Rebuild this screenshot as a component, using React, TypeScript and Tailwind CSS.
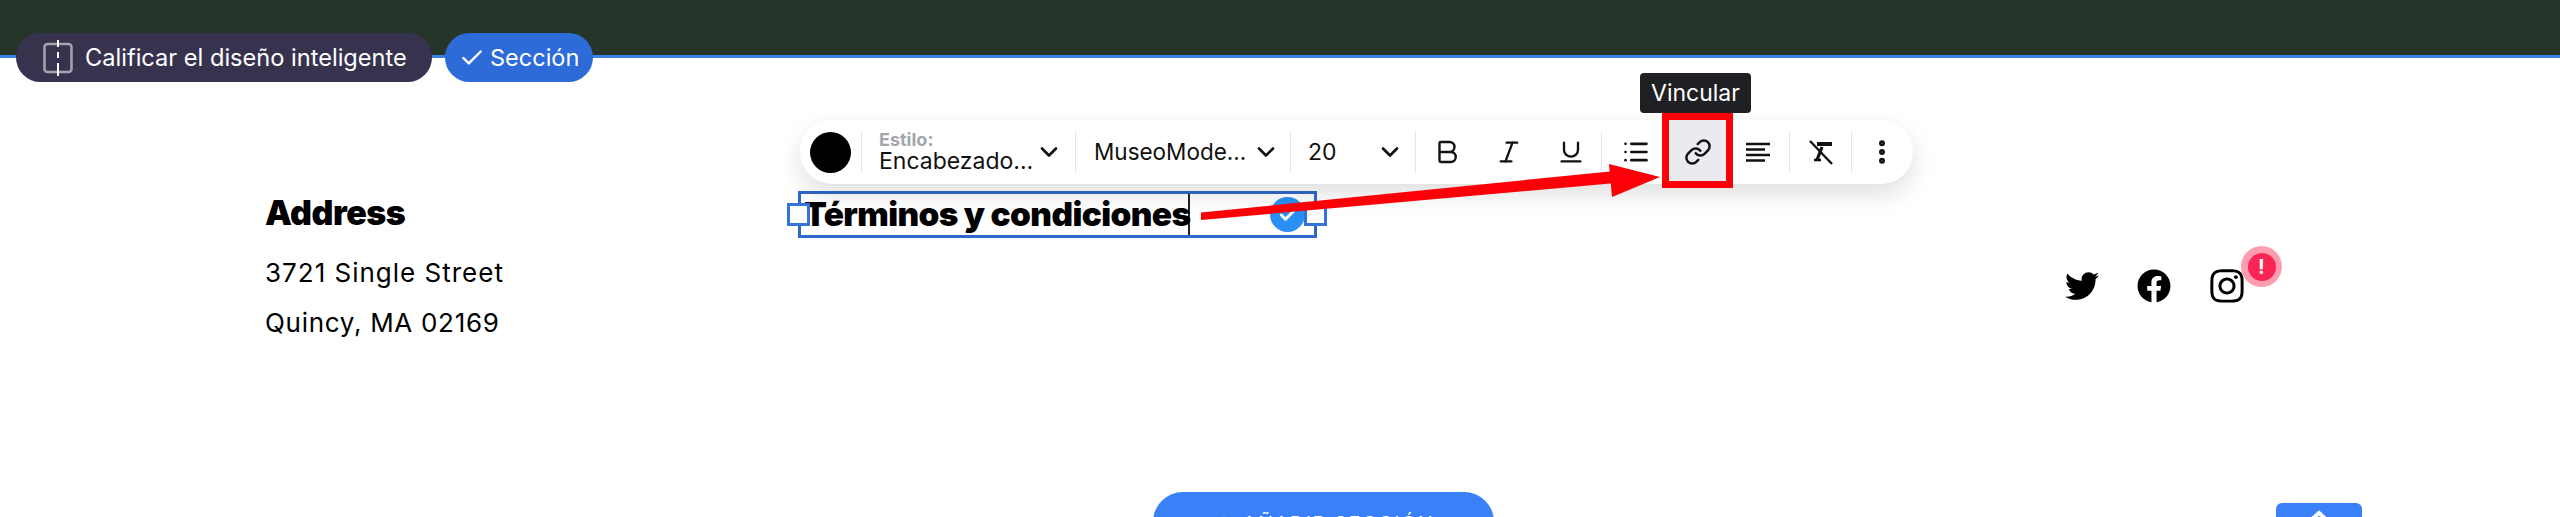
import { Bold, Check, ChevronDown, Italic, Link, List, Plus, Underline, EllipsisVertical } from "lucide-react";
import { FaFacebook, FaInstagram, FaTwitter } from "react-icons/fa";

const ui = "font-['Inter',sans-serif]";

function Divider() {
  return <div className="h-[42px] w-px shrink-0 bg-[#e5e7eb]" />;
}

function IconCell({ width, children }: { width: string; children: React.ReactNode }) {
  return <div className={`flex h-full shrink-0 items-center justify-center text-[#111] ${width}`}>{children}</div>;
}

function Toolbar() {
  return (
    <div className={`absolute left-[800px] top-[120px] z-10 flex h-[64px] w-[1113px] items-center rounded-full bg-white shadow-[0_10px_24px_rgba(0,0,0,0.13)] ${ui}`}>
      <div className="flex w-[61px] shrink-0 items-center pl-[10px]">
        <div className="h-[41px] w-[41px] rounded-full bg-black" />
      </div>
      <Divider />
      <div className="flex w-[213px] shrink-0 items-center pl-[17px] pr-[12px]">
        <div className="flex-1 leading-none">
          <div className="text-[18px] font-bold leading-[18px] text-[#a3a6ab]">Estilo:</div>
          <div className="text-[23px] leading-[25px] text-[#111]">Encabezado...</div>
        </div>
        <ChevronDown size={28} strokeWidth={2.25} className="text-[#111]" />
      </div>
      <Divider />
      <div className="flex w-[214px] shrink-0 items-center pl-[18px] pr-[10px] text-[22.5px] text-[#111]">
        <span className="flex-1">MuseoMode...</span>
        <ChevronDown size={28} strokeWidth={2.25} />
      </div>
      <Divider />
      <div className="flex w-[124px] shrink-0 items-center pl-[17px] pr-[11px] text-[23px] text-[#111]">
        <span className="flex-1">20</span>
        <ChevronDown size={28} strokeWidth={2.25} />
      </div>
      <Divider />
      <IconCell width="w-[62px]"><Bold size={30} strokeWidth={1.9} /></IconCell>
      <IconCell width="w-[62px]"><Italic size={28} strokeWidth={2} /></IconCell>
      <IconCell width="w-[61px]"><Underline size={28} strokeWidth={2} /></IconCell>
      <Divider />
      <IconCell width="w-[67px]"><List size={28} strokeWidth={2.25} /></IconCell>
      <IconCell width="w-[57px] bg-[#e9ebee]"><Link size={28} strokeWidth={2.1} /></IconCell>
      <IconCell width="w-[63px]">
        <svg width="26" height="26" viewBox="0 0 26 26" fill="none" stroke="currentColor" strokeWidth="2.4">
          <path d="M1 5h24M1 10.5h19M1 16h24M1 21.5h19" />
        </svg>
      </IconCell>
      <Divider />
      <IconCell width="w-[61px]">
        <svg width="26" height="26" viewBox="0 0 26 26" fill="none" stroke="currentColor" strokeWidth="2.4">
          <path d="M2 2 24 25" />
          <path d="M9 5h15" strokeWidth="4" />
          <path d="M14 8 9 21" strokeWidth="3.2" />
          <path d="M6 21h7" strokeWidth="2.6" />
        </svg>
      </IconCell>
      <Divider />
      <IconCell width="w-[60px]"><EllipsisVertical size={30} strokeWidth={2.75} /></IconCell>
    </div>
  );
}

function Overlays() {
  return (
    <>
      <div className={`absolute left-[16px] top-[33px] z-10 flex h-[49px] w-[416px] items-center rounded-full bg-[#37334f] pl-[27px] text-[23.6px] text-white ${ui}`}>
        <svg width="30" height="36" viewBox="0 0 30 36" fill="none" className="mr-[12px] shrink-0">
          <rect x="1.5" y="4" width="27" height="28" rx="3" stroke="#a5a3b0" strokeWidth="2.5" />
          <path d="M15 0v7M15 12v6M15 23v13" stroke="#ffffff" strokeWidth="2" />
        </svg>
        <span className="whitespace-nowrap">Calificar el diseño inteligente</span>
      </div>
      <div className={`absolute left-[445px] top-[33px] z-10 flex h-[49px] w-[148px] items-center rounded-full bg-[#2d6cd8] pl-[14px] text-[23.5px] text-white ${ui}`}>
        <Check size={26} strokeWidth={2.25} className="mr-[5px]" />
        <span>Sección</span>
      </div>

      <Toolbar />

      <div className={`absolute left-[1640px] top-[73px] z-30 flex h-[40px] w-[111px] items-center justify-center rounded-[4px] bg-[#1f2023] text-[23px] text-white ${ui}`}>
        Vincular
      </div>
      <div className="absolute left-[1662px] top-[113px] z-20 h-[75px] w-[71px] border-[7px] border-[#fb0007]" />

      <svg className="absolute left-0 top-0 z-20" width="2560" height="517" viewBox="0 0 2560 517" fill="none">
        <polygon points="1201,212.5 1615,171 1616,183 1201,220" fill="#fb0007" />
        <polygon points="1609,164 1660,177 1612,197" fill="#fb0007" />
      </svg>
    </>
  );
}

export default function App() {
  return (
    <div className="relative h-[517px] w-[2560px] overflow-hidden bg-white">
      <div className="h-[58px] border-b-[3px] border-[#3b82e8] bg-[#25352a]" />
      <Overlays />

      <main className="flex h-[434px] items-start">
        <section className="ml-[265px] mt-[132px] w-[533px] text-black">
          <h2 className="h-[46px] font-['Inter',sans-serif] text-[34px] font-black leading-[46px] tracking-[-0.5px]">Address</h2>
          <div className="mt-[12px] font-['Inter',sans-serif] text-[26px] leading-[50px]">
            <p className="tracking-[1px]">3721 Single Street</p>
            <p className="tracking-[0.7px]">Quincy, MA 02169</p>
          </div>
        </section>

        <section className="relative mt-[133px] h-[47px] w-[519px] border-[3px] border-[#2f69c9] pl-[3px]">
          <div className="flex h-full w-[386px] items-center border-r-2 border-[#222] font-['Inter',sans-serif] text-[33.4px] font-black leading-none tracking-[-0.6px] whitespace-nowrap text-black">
            Términos y condiciones
          </div>
          <div className="absolute left-[469px] top-[3px] flex h-[35px] w-[35px] items-center justify-center rounded-full bg-[#2b90f5] text-white">
            <Check size={20} strokeWidth={3.5} />
          </div>
          <div className="absolute -left-[14px] top-[9px] h-[23px] w-[23px] border-[3px] border-[#3472dc] bg-white" />
          <div className="absolute left-[503px] top-[9px] h-[23px] w-[23px] border-[3px] border-[#3472dc] bg-white" />
        </section>

        <section className="ml-[748px] mt-[209px] flex items-center text-black">
          <FaTwitter size={34} className="mr-[38px]" />
          <FaFacebook size={34} className="mr-[37px]" />
          <div className="relative">
            <FaInstagram size={38} />
            <div className="absolute left-[33px] -top-[21px] flex h-[41px] w-[41px] items-center justify-center rounded-full bg-[#ff9db0]">
              <div className="flex h-[28px] w-[28px] items-center justify-center rounded-full bg-[#fa2555] font-['Inter',sans-serif] text-[20px] font-bold leading-none text-white">!</div>
            </div>
          </div>
        </section>
      </main>

      <footer className="flex items-start">
        <button className={`ml-[1153px] flex h-[60px] w-[341px] items-center justify-center gap-2 rounded-[30px] bg-[#3a80f6] pt-[4px] text-[20px] tracking-[1.5px] text-white ${ui}`}>
          <Plus size={22} />
          AÑADIR SECCIÓN
        </button>
        <button className="ml-[782px] mt-[11px] flex h-[40px] w-[86px] items-start justify-center rounded-[6px] bg-[#3a80f6] pt-[6px] text-white">
          <svg width="28" height="16" viewBox="0 0 28 16" fill="none" stroke="currentColor" strokeWidth="4"><path d="M4 13 14 4l10 9" /></svg>
        </button>
      </footer>
    </div>
  );
}
